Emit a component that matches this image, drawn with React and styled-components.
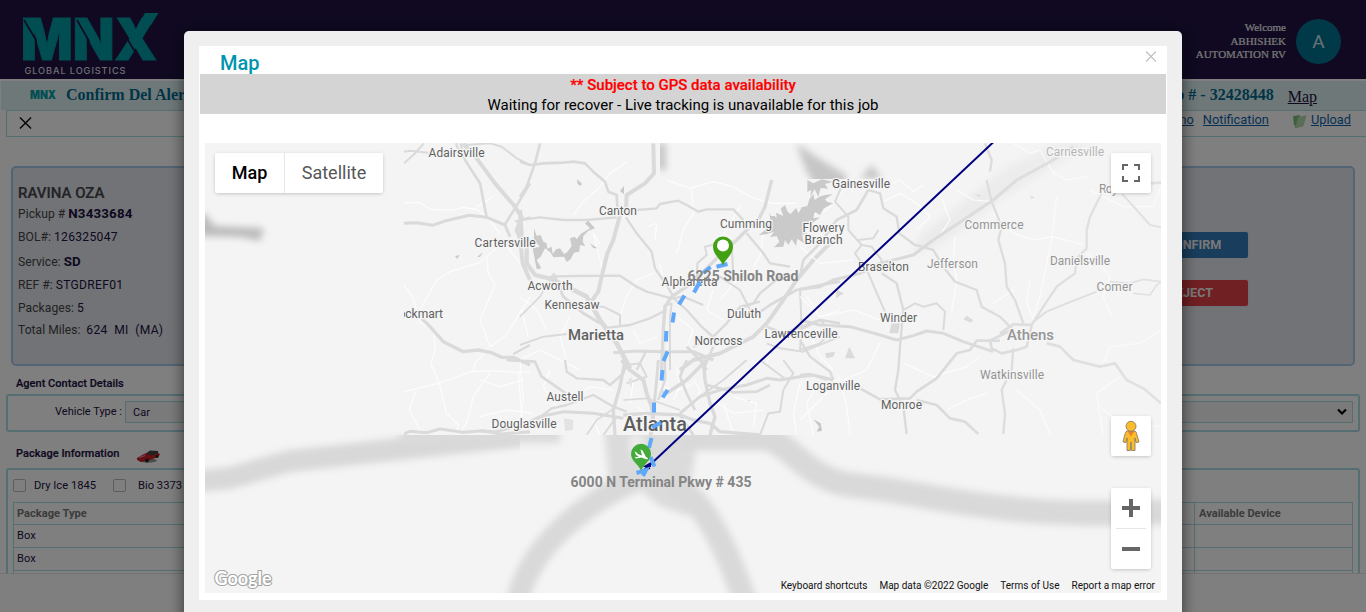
import React from "react";
import styled, { createGlobalStyle } from "styled-components";

const GlobalStyle = createGlobalStyle`
  * { box-sizing: border-box; }
  html, body { margin: 0; padding: 0; overflow: hidden; }
  body { font-family: Roboto, "Liberation Sans", sans-serif; background: #fff; }
`;

/* ---------- page behind the dialog ---------- */
const Page = styled.div`
  height: 612px;
  overflow: hidden;
  background: #fff;
  color: #1c1040;
`;
const Header = styled.header`
  height: 79px;
  background: #201343;
  display: flex;
  align-items: flex-start;
  justify-content: space-between;
  padding: 12px 25px 0 24px;
`;
const Nav = styled.nav`
  display: grid;
  grid-template-columns: 125px 114px 108px 88px 88px 1fr;
  flex: 1;
  padding: 16px 0 0 82px;
  color: #ffe9d0;
  font-size: 15px;
  line-height: 20px;
`;
const User = styled.div`
  display: flex;
  align-items: center;
  gap: 10px;
  padding-top: 7px;
`;
const Welcome = styled.div`
  font: 11px/13.7px "Liberation Serif", serif;
  color: #f2f2f2;
  text-align: right;
  -webkit-text-stroke: 0.2px #f2f2f2;
`;
const Avatar = styled.div`
  width: 45px;
  height: 45px;
  border-radius: 50%;
  background: #007391;
  color: #cfe3ea;
  display: grid;
  place-items: center;
  font-size: 19px;
`;
const TitleBar = styled.div`
  height: 29px;
  margin: 2px 0 0 1px;
  padding: 0 49px 2px 29px;
  background: #dff1f3;
  display: flex;
  align-items: center;
  font-family: "Liberation Serif", serif;
  color: #006a8e;
`;
const Title = styled.span`
  font-size: 16px;
  font-weight: bold;
  line-height: 26px;
  margin-left: 9px;
  flex: 1;
`;
const JobNumber = styled.span`
  font-size: 16px;
  font-weight: bold;
`;
const MapLink = styled.span`
  font-size: 16px;
  color: #1c1040;
  text-decoration: underline;
  margin: 4px 0 0 14px;
`;
const Toolbar = styled.div`
  height: 27px;
  margin-left: 6px;
  border: 1px solid #a9dce2;
  border-right: 0;
  display: flex;
  align-items: center;
  justify-content: space-between;
  padding: 0 15px 1px 12px;
`;
const Links = styled.div`
  display: flex;
  align-items: center;
  color: #0c63a9;
  font-size: 12.8px;
  padding-bottom: 7px;
`;
const Link = styled.span`
  text-decoration: underline;
  margin-left: ${(p) => p.$gap || 0}px;
`;
const JobCard = styled.section`
  margin: 29px 11px 0 11px;
  height: 200px;
  border: 2px solid #a7c9ea;
  border-radius: 5px;
  background: #e3e6ec;
  display: flex;
  justify-content: space-between;
  padding: 14px 105px 0 5px;
`;
const JobName = styled.div`
  font-size: 15px;
  font-weight: 500;
  line-height: 22px;
  color: #46464c;
  -webkit-text-stroke: 0.2px #46464c;
`;
const Field = styled.div`
  height: ${(p) => p.$h || 23.5}px;
  line-height: 19px;
  font-size: 12.1px;
  letter-spacing: 0.04px;
  color: #444;
  span { color: #1c1040; letter-spacing: 0.3px; }
  b { color: #1c1040; font-size: 13.3px; font-weight: 700; letter-spacing: 0.18px; }
`;
const Actions = styled.div`
  display: grid;
  gap: 20px;
  align-content: start;
  padding-top: 49px;
`;
const ActionButton = styled.div`
  width: 111px;
  height: 28px;
  margin-right: -1px;
  border: 1px solid #e2e2ea;
  border-radius: 3px;
  background: ${(p) => p.$color};
  color: #f0f0f0;
  text-align: center;
  font-size: 12.6px;
  font-weight: 700;
  line-height: 26px;
  padding-right: ${(p) => p.$inset || 0}px;
`;
const SectionTitle = styled.h3`
  margin: 0;
  height: ${(p) => p.$h}px;
  padding: ${(p) => p.$top}px 0 0 16px;
  font-size: 11px;
  line-height: 14px;
  font-weight: 500;
  letter-spacing: 0.03px;
  -webkit-text-stroke: 0.2px #1c1040;
  display: flex;
  align-items: flex-start;
  gap: 17px;
`;
const Box = styled.div`
  margin: 0 6px;
  border: 2px solid #a9dce2;
  border-radius: 3px;
  height: ${(p) => p.$h}px;
`;
const AgentBox = styled(Box)`
  display: flex;
  align-items: flex-start;
  padding: 5px 5px 0 0;
  font-size: 11px;
  label { width: 117px; padding-right: 3px; text-align: right; line-height: 21px; }
`;
const Select = styled.div`
  flex: 1;
  height: 22px;
  border: 1px solid #a9dce2;
  background: #f4f4f6;
  padding: 0 5px 0 7px;
  display: flex;
  align-items: center;
  justify-content: space-between;
`;
const Clip = styled.div`
  height: 106px;
  overflow: hidden;
  border-bottom: 1px solid #e5e5e5;
`;
const CheckRow = styled.div`
  display: flex;
  align-items: center;
  height: 32px;
  padding: 0 5px 1px;
  font-size: 11.2px;
`;
const Check = styled.span`
  width: 13px;
  height: 13px;
  border: 1px solid #bbb;
  border-radius: 2px;
  margin: 0 ${(p) => p.$after || 8}px 0 0;
`;
const CheckText = styled.span`
  width: ${(p) => p.$w}px;
`;
const Table = styled.div`
  margin: 0 5px 0 5px;
  border: 1px solid #a9dce2;
`;
const Row = styled.div`
  display: grid;
  grid-template-columns: 1181px 1fr;
  height: ${(p) => (p.$head ? 22 : 23)}px;
  border-bottom: 1px solid #a9dce2;
  font-size: 11.1px;
  line-height: 21px;
  font-weight: ${(p) => (p.$head ? 700 : 400)};
  color: ${(p) => (p.$head ? "#777" : "#1c1040")};
  span { padding-left: 3px; border-right: 1px solid #a9dce2; }
  span + span { padding-left: 4px; border-right: 0; }
`;

/* ---------- dialog ---------- */
const Overlay = styled.div`
  position: fixed;
  inset: 0;
  background: rgba(0, 0, 0, 0.5);
  display: flex;
  justify-content: center;
  padding-top: 31px;
`;
const Dialog = styled.div`
  width: 998px;
  height: 620px;
  flex: none;
  background: #efefef;
  border-radius: 5px;
  padding: 15px;
  box-shadow: 0 5px 16px rgba(0, 0, 0, 0.6);
`;
const DialogBody = styled.div`
  height: 554px;
  background: #fff;
`;
const DialogHead = styled.div`
  height: 28px;
  display: flex;
  justify-content: space-between;
  padding: 4px 11px 0 21px;
  color: #0095ae;
  font-size: 20px;
  line-height: 27px;
  font-weight: 500;
`;
const Notice = styled.div`
  height: 40px;
  margin: 0 1px;
  padding-top: 1px;
  background: #d4d4d4;
  color: #000;
  text-align: center;
  font-size: 15px;
  line-height: 20px;
  strong { display: block; color: #f00; font-weight: 500; -webkit-text-stroke: 0.2px #f00; }
`;
const MapFrame = styled.div`
  position: relative;
  margin: 29px 6px 0;
  height: 450px;
  background: #f4f4f4;
`;
const MapCanvas = styled.svg`
  display: block;
  width: 956px;
  height: 450px;
  font-family: Roboto, sans-serif;
`;
const Control = styled.div`
  position: absolute;
  right: 10px;
  top: ${(p) => p.$top}px;
  width: 40px;
  height: ${(p) => p.$h || 40}px;
  background: #fff;
  border-radius: 2px;
  box-shadow: 0 1px 4px -1px rgba(0, 0, 0, 0.3);
  display: flex;
  flex-direction: column;
  align-items: center;
  justify-content: center;
`;
const TypeSwitch = styled.div`
  position: absolute;
  left: 10px;
  top: 10px;
  height: 40px;
  display: flex;
  background: #fff;
  border-radius: 2px;
  box-shadow: 0 1px 4px -1px rgba(0, 0, 0, 0.3);
  font-size: 18px;
  line-height: 40px;
  text-align: center;
`;
const TypeButton = styled.div`
  width: ${(p) => p.$w}px;
  color: ${(p) => (p.$on ? "#000" : "#565656")};
  font-weight: ${(p) => (p.$on ? 500 : 400)};
  border-right: ${(p) => (p.$on ? "1px solid #e6e6e6" : "0")};
`;
const Credits = styled.div`
  position: absolute;
  right: 6px;
  bottom: 0;
  display: flex;
  gap: 12px;
  font-size: 10px;
  line-height: 15px;
  color: #111;
`;

const MnxLogo = () => (
  <svg width="136" height="64" viewBox="24 12 136 64" overflow="visible">
    <text x="21" y="60" fill="#009aa4" stroke="#009aa4" strokeWidth="1" fontFamily="Inter, sans-serif" fontWeight="900" fontSize="58" textLength="136" lengthAdjust="spacingAndGlyphs">MNX</text>
    <path d="M24 20 L36 40 V62 M77 20 L89 41 V62 M116 20 L141 62" stroke="#201343" strokeWidth="1.6" fill="none" />
    <path d="M138 25 L145 13 H158.500 L151 25Z" fill="#009aa4" />
    <text x="24.500" y="73.500" fill="#dcdce4" fontFamily="Inter, sans-serif" fontWeight="500" fontSize="9.200" textLength="101">GLOBAL LOGISTICS</text>
  </svg>
);

const CarIcon = () => (
  <svg width="25" height="15" viewBox="0 0 25 15" style={{ marginTop: 2 }}>
    <ellipse cx="12" cy="11.500" rx="9" ry="2" fill="#999" />
    <path d="M1 9 L7 5.500 L13 3 L22 3.500 L24 5.500 L22 8 L14 11 L5 13 L1 11Z" fill="#c8202a" />
    <path d="M10 4.500 L14 1.500 L22 2 L22 4.500 L15 6.500Z" fill="#444" />
    <circle cx="11" cy="11.500" r="2" fill="#222" />
    <circle cx="21" cy="7.500" r="1.500" fill="#222" />
    <path d="M3 8.500 L9 6.500" stroke="#ff9a9a" />
  </svg>
);

const SheetsIcon = styled.svg`
  margin: 3px 4px 0 23px;
`;
const Sheets = () => (
  <SheetsIcon width="15" height="15" viewBox="0 0 15 15">
    <path d="M1 2 L8 1 L5 13 L2 11Z" fill="#7cbf78" />
    <path d="M6 3 L14 2 L11 12 L3 14Z" fill="#b4dcac" stroke="#8cc488" strokeWidth=".5" />
  </SheetsIcon>
);

/* ---------- map data: each sheet holds traced paths at three units per pixel ---------- */
const SHEETS = [
  {
    at: [200, 130],
    minor: [
      "M612 218 660 218 690 238 760 240 790 232 830 238 860 260 900 310", "M612 465 640 505 660 575 685 590",
      "M660 540 710 450 750 425 840 398 860 380 905 340", "M860 380 865 430 885 465 840 570 870 650 920 615 965 540 990 500",
      "M865 655 825 700 820 725 860 722 955 727 990 725", "M870 730 820 800 800 880 780 905", "M612 785 715 760 770 740 820 722",
      "M700 600 705 660 692 700 718 760 740 850 775 885 770 905", "M648 782 628 840 660 900", "M955 725 965 860", "M965 540 985 620",
      "M830 230 880 200", "M915 340 965 405",
    ],
    road: [
      ["M612 100 640 75 672 40", 6], ["M612 65 630 62 685 68", 6], ["M782 40 795 90 840 160 860 262", 8], ["M768 40 775 60", 7],
      ["M790 40 830 85 885 160 945 230 965 262 950 300 960 325 968 400 990 450", 12],
      ["M612 280 650 278 698 286 735 273 808 256 860 262 915 285 930 320", 9], ["M915 283 945 235 990 160", 8], ["M945 275 990 262", 6],
      ["M800 45 870 40 905 50 950 85 990 105", 6], ["M665 565 690 590 730 635 790 665 835 660 875 668 905 682 940 682 990 705", 10],
      ["M612 912 630 904 680 908 720 897 790 907 850 902 900 912 990 905", 9], ["M940 672 990 645", 7],
    ],
  },
  {
    at: [520, 130],
    minor: [
      "M320 95 270 130 240 170 190 215 160 255", "M440 150 510 175 580 155 640 170 700 205 760 220 830 220", "M515 180 520 250 490 300 470 370",
      "M380 290 410 280 405 330", "M240 340 220 310 250 430", "M0 500 50 540 80 600", "M0 690 60 660 140 700 180 720", "M150 560 120 620 140 690",
      "M420 400 430 460", "M300 560 320 500 350 450 400 430", "M340 600 360 640 410 620", "M470 560 520 600 500 650", "M580 480 560 540 610 570",
      "M760 640 740 700", "M860 500 900 560 960 540", "M870 610 900 680 940 720", "M660 230 600 330", "M700 430 640 460 600 510", "M730 310 720 380 700 410",
    ],
    road: [
      ["M60 40 45 100 20 170 0 200", 8], ["M0 95 30 105 70 100 130 98 160 95 195 100 225 130 255 155 265 185 290 195 292 230 305 250", 8],
      ["M400 40 402 130 375 160 320 195 318 240", 12], ["M0 270 60 262 130 270 200 270 290 262", 7],
      ["M300 255 280 330 262 370 245 440 235 485 210 520", 12], ["M318 262 350 310 395 365 405 415 440 465 460 500", 7],
      ["M350 240 410 235 420 222 475 212 500 225 535 245 560 238 640 238 670 270", 7],
      ["M755 150 735 230 715 270 680 300 650 330 590 385 545 430 500 470 455 500 435 530 430 600 425 720", 10],
      ["M680 310 730 370 750 400 810 410", 7], ["M0 240 5 320 20 350 20 400 45 435 100 448", 13],
      ["M90 440 160 438 300 437 350 470 380 485 455 505 490 500 550 525", 7], ["M90 445 140 470 200 500 240 570 290 640 330 715", 14],
      ["M100 430 130 500 190 550 240 580", 9], ["M210 530 250 530 300 555 300 590", 6], ["M250 595 330 585 390 565 440 540", 7],
      ["M0 645 70 620 140 612", 6], ["M280 668 350 663 430 665 520 665 580 690", 9], ["M455 500 500 540 545 590 600 640", 7],
      ["M480 720 520 690 600 670 700 620 740 580 790 510 830 450 880 390 960 310", 12], ["M700 560 750 525 830 480 900 465 960 455", 8],
      ["M840 480 845 590 840 660", 6], ["M740 590 790 610 860 585 900 570 960 580", 8], ["M650 540 700 520 720 490 780 440", 7],
      ["M530 470 532 400 560 375 555 350 590 342", 6], ["M635 330 640 450", 6], ["M520 650 580 620 620 580 660 530 720 515", 7],
      ["M740 640 780 655 850 665 960 620", 6], ["M430 530 455 520 450 560 450 720", 6], ["M500 650 540 690 560 720", 9], ["M580 650 550 720", 7],
      ["M380 660 350 720", 7], ["M600 440 660 480 700 560", 6], ["M0 560 60 500 90 450", 5],
    ],
  },
  {
    at: [800, 130],
    minor: [
      "M230 180 300 150 340 185 370 165", "M250 215 300 190 350 220 390 260 350 300", "M130 180 80 240 0 270", "M580 250 640 310 700 330 760 320 850 345",
      "M470 180 520 210 575 215", "M640 40 690 70 720 60", "M720 60 760 130 800 150 860 140", "M770 200 755 330 740 400 720 500 700 560",
      "M860 370 900 400 930 440 910 500 935 560", "M640 480 580 520", "M690 450 680 520 700 570", "M465 320 460 400 470 450 455 545",
      "M0 500 60 560 160 540 240 570", "M240 640 200 720 110 760 0 870", "M115 740 140 830 150 912", "M310 700 400 740 500 710 540 680",
      "M560 790 500 810 440 840", "M650 780 720 840 750 912", "M1083 600 1020 640 930 650 910 700", "M960 740 890 790 900 860 910 912",
      "M420 190 450 270 410 330", "M0 350 60 400 160 390", "M1083 170 1060 230 970 230 870 180", "M60 130 130 130 160 190", "M900 830 960 880 1083 890",
    ],
    road: [
      ["M0 478 60 470 100 450 180 430 240 400 340 375 400 330 520 250 580 210 650 150 760 90 820 50", 9],
      ["M0 440 10 390 60 340 110 270 170 240 205 180", 8], ["M125 170 105 215 145 260 145 300 185 345 165 370 205 430 235 500 255 545", 6],
      ["M205 180 240 190 250 235 290 260 298 310 345 345 400 360 430 410 465 455 530 480 545 530 600 560 635 595", 7],
      ["M555 40 575 90 570 125 M560 150 575 215 605 290 595 330 615 400 620 470 645 510 670 580", 7],
      ["M905 190 870 260 860 300 860 355 830 385 825 430 770 470 730 530 695 585", 7], ["M700 575 740 545 800 520 890 485", 6],
      ["M965 190 1010 240 1050 285 1083 292", 6], ["M930 455 990 460 1030 448 1083 455", 5], ["M1000 490 1050 495 1070 465 1083 455", 5],
      ["M635 600 570 632 575 655 605 670 650 660 680 650 690 610 695 585 640 583 600 610", 8],
      ["M580 665 490 635 430 610 380 603 340 617 290 630 230 612 150 590 60 585 0 570", 9],
      ["M600 632 530 632 510 660 470 670 410 745 350 785 330 805 240 808 180 775", 8],
      ["M740 640 780 650 820 690 900 710 945 700 980 750 1030 775 1083 820", 8], ["M640 655 635 720 605 780 615 850 610 912", 7],
      ["M245 430 290 460 310 540 300 650 295 720 285 780 310 830 320 912", 7], ["M310 540 345 520 370 530 410 520 435 545 430 600", 6],
      ["M350 810 410 825 450 865 495 875 535 912", 8], ["M0 600 60 570 80 590", 6], ["M0 630 30 680 90 725 100 750", 7], ["M0 735 30 732 80 750", 7],
      ["M175 330 220 325 235 300", 6], ["M185 345 215 350 245 390 240 410", 6], ["M1050 160 1083 158", 8], ["M0 660 60 640 80 620", 6],
    ],
  },
  {
    at: [480, 360],
    minor: [
      "M0 60 60 80 130 60", "M120 0 130 120 120 190", "M210 30 190 80 230 140", "M300 100 330 80 400 90", "M340 180 360 225", "M460 60 450 130",
      "M580 120 600 80 590 20", "M640 60 660 90 650 130", "M730 130 760 220", "M760 110 830 130 820 200", "M960 70 940 160 950 225", "M1010 80 980 130 1000 225",
      "M540 80 600 90 640 70", "M470 140 500 160 480 200", "M560 225 600 180", "M700 120 760 160 850 150", "M1060 60 1140 90", "M0 170 80 150 160 160",
    ],
    road: [
      ["M80 0 165 5 185 50 250 95 280 120", 8], ["M255 0 260 35 290 55 370 60 390 75 430 40 440 15", 7], ["M435 0 420 80 400 150 405 225", 10],
      ["M100 215 170 180 215 145 260 135 340 105 400 140 440 155", 7], ["M0 213 50 215 140 190 180 170 250 155 340 160 430 175", 9],
      ["M430 165 500 160 600 165 640 180 690 190 720 215 840 225", 10], ["M425 0 450 30 490 60 500 100 515 140 520 180 512 225", 12],
      ["M535 0 530 60 520 160", 9], ["M555 0 555 60 535 120", 7], ["M670 0 675 60 690 130 705 170 690 225", 10],
      ["M560 100 620 60 680 0", 11], ["M545 95 560 100", 8], ["M600 160 660 110 720 90 800 75 860 55 900 60 960 50 1000 45 1060 60", 9],
      ["M680 75 720 85 760 97 830 95 870 75", 8], ["M840 225 865 160 900 155 910 90 940 40 910 0", 6], ["M645 150 620 100 600 50 620 0", 8],
      ["M440 15 480 10 500 50 440 70", 6], ["M600 165 640 225", 8], ["M370 225 410 170", 6], ["M320 225 350 180 410 140", 5], ["M800 0 730 60 660 110", 6],
      ["M840 0 900 45 920 60", 6], ["M430 120 500 115 600 150", 5],
    ],
  },
];

const LABELS = [
  ["Adairsville", 456.5, 157, 56], ["Canton", 618, 214.500, 38], ["Cartersville", 505, 246.500, 61], ["Acworth", 550, 289.500, 45],
  ["Kennesaw", 572, 308.500, 55], ["Cumming", 746, 227.500, 52], ["Gainesville", 861, 187.500, 58], ["Flowery", 823.500, 231.500, 42],
  ["Branch", 823.500, 243.500, 38], ["Braselton", 883.500, 270.500, 51], ["Alpharetta", 689.500, 285.500, 56], ["Duluth", 744, 317.500, 34],
  ["Norcross", 718.500, 344.500, 48], ["Lawrenceville", 801, 337.500, 73], ["Winder", 898.500, 321.500, 37], ["Loganville", 833, 389.500, 54],
  ["Monroe", 901.500, 408.500, 41], ["Austell", 565, 400.500, 37], ["Douglasville", 524, 427.500, 65],
  ["Commerce", 994, 228.500, 59, 1], ["Jefferson", 952.500, 267.500, 51, 1], ["Danielsville", 1080, 264.500, 60, 1], ["Comer", 1114.500, 290.500, 36, 1],
  ["Watkinsville", 1012, 378.500, 64, 1], ["Carnesville", 1075, 155.500, 58, 2], ["Royston", 1119, 192.500, 40, 1],
];

const DASHES = [
  "M716.500 266.700 727.500 264", "M703.500 273 710.500 267", "M700 281.500 694 292.500", "M684.500 295.500 679 304.500", "M674 312.500 672.600 322.500",
  "M666.300 331 666 341.500", "M667.600 351.500 663.500 361", "M662.400 370 661.600 380.500", "M667.600 390 662.600 397.500", "M654 402.500 654 412.500",
  "M661 422.500 652 427.500", "M651.500 438 649 448", "M650.600 457 654.500 466.500", "M636.500 473 646 470 643 476",
];

const LAKES = [
  "M748 245 752 258 764 258 770 265 768 248 790 258 782 236 795 225 803 245 812 252 828 234 836 250 845 232 862 228 868 208 880 192 884 210 898 200 915 195 938 192 915 208 922 216 940 220 912 235 900 255 884 246 880 265 900 262 870 285 862 275 850 300 868 318 846 312 852 340 832 326 828 348 815 328 805 345 795 330 790 350 762 352 778 335 770 318 750 322 762 305 742 312 716 316 738 298 728 288 752 282Z",
  "M862 150 880 160 905 148 940 155 915 162 924 176 902 174 895 200 884 178 870 202 874 180 862 186Z",
  "M42 295 50 318 62 315 70 335 80 340 82 356 95 350 98 372 108 358 120 355 132 372 142 366 155 348 150 325 164 320 170 328 182 312 210 295 195 280 205 272 225 295 205 302 190 318 188 335 196 348 180 345 178 365 162 368 152 388 140 396 132 380 100 382 92 368 75 355 62 380 50 390 64 415 50 418 38 355 60 350 42 330Z",
  "M172 148 185 160 183 168 172 162Z M300 183 312 168 312 193Z M210 340 233 355 220 355Z",
];

const Sheet = ({ data }) => (
  <g transform={`translate(${data.at[0]} ${data.at[1]}) scale(.33333)`} fill="none" strokeLinejoin="round">
    {data.minor.map((d) => <path key={d} d={d} stroke="#fdfdfd" strokeWidth="3.400" />)}
    {data.road.map(([d, w]) => <path key={d} d={d} stroke="#dadada" strokeWidth={w} />)}
  </g>
);

const MapDrawing = () => (
  <MapCanvas viewBox="205 143 956 450">
    <defs>
      <filter id="soft" x="-20%" y="-40%" width="140%" height="180%"><feGaussianBlur stdDeviation="3.500" /></filter>
      <clipPath id="sharp"><path d="M404 143H660V179H916V143H1161V435H404Z" /></clipPath>
      <clipPath id="low"><rect x="205" y="435" width="956" height="158" /></clipPath>
      <clipPath id="lowLeft"><path d="M205 143H404V435H520V593H205Z" /></clipPath>
      <clipPath id="upper"><path d="M660 143H930V179H660Z" /></clipPath>
      <linearGradient id="fade" x1="0" x2="1"><stop offset="0" stopColor="#f4f4f4" stopOpacity="0" /><stop offset="1" stopColor="#f4f4f4" stopOpacity=".3" /></linearGradient>
    </defs>
    <rect x="205" y="143" width="956" height="450" fill="#f4f4f4" />
    <g clipPath="url(#lowLeft)">
      <path d="M190 210 L205 214 L215 226 L264 228 L260 241 L240 237 L190 236Z" fill="#bcbcbc" filter="url(#soft)" />
      <path d="M190 482 L230 478 L290 461 L400 449 L530 435" stroke="#d8d8d8" strokeWidth="22" fill="none" filter="url(#soft)" />
    </g>
    <g clipPath="url(#low)">
      <g filter="url(#soft)" fill="none" stroke="#d9d9d9">
        <path d="M400 432 H560" stroke="#dadada" strokeWidth="22" />
        <path d="M603 420 H695 V458 L690 482 L705 505 L688 516 L660 506 L636 487 L610 486Z" fill="#dbdbdb" stroke="none" />
        <path d="M640 478 C590 500 525 545 516 610" strokeWidth="23" />
        <path d="M672 482 C705 500 728 550 748 610" strokeWidth="24" />
        <path d="M680 438 H765 C792 444 805 478 850 485 C930 492 1000 522 1180 511" strokeWidth="25" />
      </g>
      <path d="M629 435H645L642 456H630Z" fill="#ececec" filter="url(#soft)" />
    </g>
    <g clipPath="url(#upper)" filter="url(#soft)" fill="#c6c6c6">
      <path d="M796 143 L815 156 L846 175 V190 H817 L805 168Z M872 165 L882 179 H860Z M656 143 H666 V170 H656Z" />
    </g>
    <path d="M912 255 L945 242 L1000 200 L1080 150 L1100 140 H1065 L1010 165 L920 235Z" fill="#ebebeb" filter="url(#soft)" />
    <g clipPath="url(#sharp)">
      {SHEETS.map((s) => <Sheet key={s.at.join()} data={s} />)}
      <g transform="translate(520 130) scale(.33333)" fill="#cacaca">{LAKES.map((d) => <path key={d} d={d} />)}</g>
      <g transform="translate(800 130) scale(.33333)" fill="#dadada">
        <path d="M40 868 62 880 66 902 50 905 58 890Z" fill="#c6c6c6" />
        <path d="M490 568 500 557 520 570 512 578Z M148 650 165 685 135 685Z M75 670 105 665 100 680 80 685Z M110 480 132 490 108 505Z M275 580 300 580 295 610 268 610Z M520 192 542 195 538 201Z M692 197 705 203 692 206Z" />
      </g>
      <g transform="translate(480 360) scale(.33333)" fill="#e3e3e3"><path d="M252 175 280 180 278 210 255 213Z M800 120 812 120 808 125Z M445 60 455 50 455 85Z" /></g>
      <path d="M455 256 460 255 457 259Z M477 257 483 252 480 257Z" fill="#ccc" />
      <rect x="916" y="143" width="245" height="292" fill="url(#fade)" />
    </g>
    <g fontSize="12" textAnchor="middle" paintOrder="stroke" stroke="#f5f5f5" strokeWidth="2.500">
      {LABELS.map(([t, x, y, w, dim]) => (
        <text key={t} x={x} y={y} textLength={w} fill={dim === 2 ? "#b5b5b5" : dim ? "#939393" : "#616161"}>{t}</text>
      ))}
      <svg x="404" y="303" width="60" height="20"><text x="39" y="14.500" textAnchor="end" fill="#616161">Rockmart</text></svg>
      <text x="596" y="340" fontSize="14" fontWeight="500" fill="#616161" textLength="56" lengthAdjust="spacingAndGlyphs">Marietta</text>
      <text x="1030.500" y="340" fontSize="14.500" fontWeight="500" fill="#969696" textLength="47" lengthAdjust="spacingAndGlyphs">Athens</text>
      <text x="655" y="431" fontSize="20" fontWeight="500" fill="#5d5d5d" textLength="64" lengthAdjust="spacingAndGlyphs">Atlanta</text>
    </g>
    <path d="M993.500 142 L652 463 L645 469 L650 468 M651 463 L646 466 L651 466" stroke="#000080" strokeWidth="2" fill="none" />
    <g stroke="#60a9fa" strokeWidth="4" fill="none">{DASHES.map((d) => <path key={d} d={d} />)}</g>
    <path d="M723 265.500 C721 259 713 255 713 246.500 A10 10 0 0 1 733 246.500 C733 255 725 259 723 265.500Z" fill="#43a013" />
    <circle cx="723" cy="245.500" r="6" fill="#fff" />
    <path d="M641 470.500 C638 464 631 461 631 453.800 A10 10 0 0 1 651 453.800 C651 461 644 464 641 470.500Z" fill="#43ab39" />
    <path d="M634.500 451.500 L636 452 L638 454 L642 455.500 L640.500 449.500 L642.500 450.500 L646 457 C649 458.500 648.500 460 645.500 459 L641.500 457.500 L636 458.500 L634.500 457.500 L639 456.500 L636 455Z" fill="#fff" />
    <g fontSize="14" fontWeight="700" fill="#858585" textAnchor="middle">
      <text x="743" y="281" textLength="111">6225 Shiloh Road</text>
      <text x="661" y="487" textLength="181">6000 N Terminal Pkwy # 435</text>
    </g>
    <text x="214.500" y="585" fontSize="18" fontFamily="Lato, sans-serif" fontWeight="700" textLength="57" lengthAdjust="spacingAndGlyphs" fill="#fff" stroke="#a5a5a5" strokeWidth="2.200" paintOrder="stroke">Google</text>
  </MapCanvas>
);

const Pegman = () => (
  <svg width="18" height="32" viewBox="0 0 18 32">
    <path d="M4.500 11 L13 11 Q14.500 12 15 15 L17 22 L14 22.500 L13 18 V30.500 H9.500 L9 22 L8.300 30.500 H5 V18 L4 22.500 L1 22 L3 14Z" fill="#fbbc2c" stroke="#7d7462" strokeWidth=".8" />
    <path d="M5.500 11 H12.500 L9 16.500Z" fill="#e5812e" />
    <circle cx="9" cy="6.300" r="5" fill="#fbbc2c" stroke="#7d7462" strokeWidth=".8" />
  </svg>
);

export default function App() {
  return (
    <>
      <GlobalStyle />
      <Page>
        <Header>
          <MnxLogo />
          <Nav><span>Operations</span><span>Lookup</span><span>Reports</span><span>Admin</span><span>Tools</span><span>Preferences</span></Nav>
          <User>
            <Welcome>Welcome<br />ABHISHEK<br />AUTOMATION RV</Welcome>
            <Avatar>A</Avatar>
          </User>
        </Header>
        <TitleBar>
          <svg width="27" height="16" viewBox="0 -2 27 16"><text x="0" y="10" fontFamily="Inter, sans-serif" fontWeight="900" fontSize="11.500" textLength="26" lengthAdjust="spacingAndGlyphs" fill="#009aa4">MNX</text></svg>
          <Title>Confirm Del Alert</Title>
          <JobNumber>Job # - 32428448</JobNumber>
          <MapLink>Map</MapLink>
        </TitleBar>
        <Toolbar>
          <svg width="13" height="14" viewBox="0 0 14 14"><path d="M1 1 13 13M13 1 1 13" stroke="#111" strokeWidth="1.600" /></svg>
          <Links><Link>Memo</Link><Link $gap={9}>Notification</Link><Sheets /><Link>Upload</Link></Links>
        </Toolbar>
        <JobCard>
          <div>
            <JobName>RAVINA OZA</JobName>
            <Field $h={24}>Pickup # <b>N3433684</b></Field>
            <Field $h={24}>BOL#: <span>126325047</span></Field>
            <Field>Service: <b>SD</b></Field>
            <Field $h={23}>REF #: <span>STGDREF01</span></Field>
            <Field $h={22}>Packages: <span>5</span></Field>
            <Field>Total Miles: <span>&thinsp;624&nbsp; MI&nbsp; (MA)</span></Field>
          </div>
          <Actions>
            <ActionButton $color="#327ab9">CONFIRM</ActionButton>
            <ActionButton $color="#e03e44" $inset={6}>REJECT</ActionButton>
          </Actions>
        </JobCard>
        <SectionTitle $h={28} $top={11}>Agent Contact Details</SectionTitle>
        <AgentBox $h={38}>
          <label>Vehicle Type :</label>
          <Select>Car<svg width="10" height="8" viewBox="0 0 10 8"><path d="M1 1.500 5 5.500 9 1.500" stroke="#000" strokeWidth="2.200" fill="none" /></svg></Select>
        </AgentBox>
        <SectionTitle $h={36} $top={15}>Package Information<CarIcon /></SectionTitle>
        <Clip>
          <Box $h={140}>
            <CheckRow>
              <Check /><CheckText $w={79}>Dry Ice 1845</CheckText>
              <Check $after={12} /><CheckText $w={60}>Bio 3373</CheckText>
            </CheckRow>
            <Table>
              <Row $head><span>Package Type</span><span>Available Device</span></Row>
              <Row><span>Box</span><span /></Row>
              <Row><span>Box</span><span /></Row>
              <Row><span /><span /></Row>
            </Table>
          </Box>
        </Clip>
      </Page>
      <Overlay>
        <Dialog>
          <DialogBody>
            <DialogHead>
              Map
              <svg width="10" height="14" viewBox="0 0 10 14"><path d="M0 1.500 10 11.500M10 1.500 0 11.500" stroke="#bbb" strokeWidth="1.200" /></svg>
            </DialogHead>
            <Notice><strong>** Subject to GPS data availability</strong>Waiting for recover - Live tracking is unavailable for this job</Notice>
            <MapFrame>
              <MapDrawing />
              <TypeSwitch><TypeButton $w={70} $on>Map</TypeButton><TypeButton $w={98}>Satellite</TypeButton></TypeSwitch>
              <Control $top={10}>
                <svg width="18" height="18" viewBox="0 0 18 18"><path d="M1 6V1H6M12 1H17V6M17 12V17H12M6 17H1V12" stroke="#666" strokeWidth="2" fill="none" /></svg>
              </Control>
              <Control $top={273}><Pegman /></Control>
              <Control $top={345} $h={81}>
                <svg width="30" height="81" viewBox="0 0 30 81"><path d="M6 20H24M15 11V29M6 61H24" stroke="#666" strokeWidth="4" /><path d="M0 40.500H30" stroke="#e6e6e6" /></svg>
              </Control>
              <Credits><span>Keyboard shortcuts</span><span>Map data ©2022 Google</span><span>Terms of Use</span><span>Report a map error</span></Credits>
            </MapFrame>
          </DialogBody>
        </Dialog>
      </Overlay>
    </>
  );
}
